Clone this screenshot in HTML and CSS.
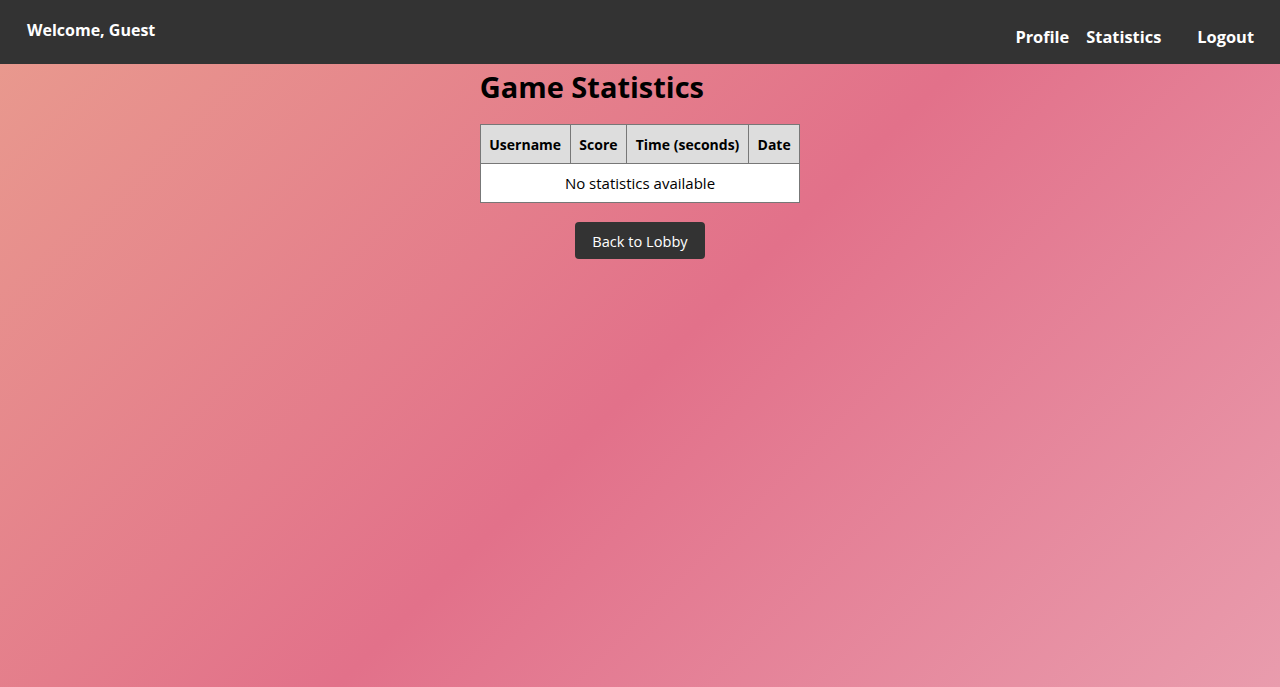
FILE: index.html
```html
<!DOCTYPE html>
<html lang="en">
<head>
<meta charset="utf-8">
<title>Game Statistics</title>
<link rel="stylesheet" href="styles.css">
</head>
<body>
<header class="topbar">
  <div class="welcome">Welcome, Guest</div>
  <nav class="nav">
    <a class="nav-link" href="#">Profile</a>
    <a class="nav-link" href="#">Statistics</a>
    <a class="nav-link logout" href="#">Logout</a>
  </nav>
</header>
<main class="page">
  <section class="stats">
    <h1 class="title">Game Statistics</h1>
    <table class="stats-table">
      <thead>
        <tr><th>Username</th><th>Score</th><th>Time (seconds)</th><th>Date</th></tr>
      </thead>
      <tbody>
        <tr><td colspan="4">No statistics available</td></tr>
      </tbody>
    </table>
    <button class="back-btn" type="button">Back to Lobby</button>
  </section>
</main>
</body>
</html>
```
FILE: styles.css
```css
* { box-sizing: border-box; }
html, body { height: 100%; }
body {
  margin: 0;
  font-family: "Comic Sans MS", "Open Sans", sans-serif;
  background: linear-gradient(135deg, #e99b8e 0%, #e2718a 52%, #e99cad 100%);
  color: #000;
  min-height: 687px;
}
.topbar {
  height: 64px;
  background: #333333;
  display: flex;
  justify-content: space-between;
  padding: 0 26px 0 27px;
}
.welcome {
  color: #fff;
  font-weight: bold;
  font-size: 16px;
  margin-top: 19px;
}
.nav {
  display: flex;
  align-items: flex-start;
  margin-top: 25px;
}
.nav-link {
  color: #fff;
  font-weight: bold;
  font-size: 16.4px;
  text-decoration: none;
  margin-left: 17px;
}
.nav-link.logout { margin-left: 36px; }
.page {
  display: flex;
  justify-content: center;
}
.stats {
  display: flex;
  flex-direction: column;
  align-items: center;
}
.title {
  align-self: flex-start;
  margin: 5px 0 19px 0;
  font-size: 29px;
  font-weight: bold;
  line-height: 36px;
}
.stats-table {
  border-collapse: collapse;
  background: #fff;
  font-size: 15px;
}
.stats-table th, .stats-table td {
  border: 1px solid #777;
  padding: 0 8.6px;
  height: 39px;
  text-align: center;
}
.stats-table th {
  background: #dddddd;
  font-weight: bold;
  font-size: 14px;
}
.stats-table td { font-weight: normal; }
.back-btn {
  margin-top: 19px;
  background: #333333;
  color: #fff;
  border: none;
  border-radius: 4px;
  height: 37px;
  padding: 0 17px;
  font-family: inherit;
  font-size: 14.6px;
}
```
